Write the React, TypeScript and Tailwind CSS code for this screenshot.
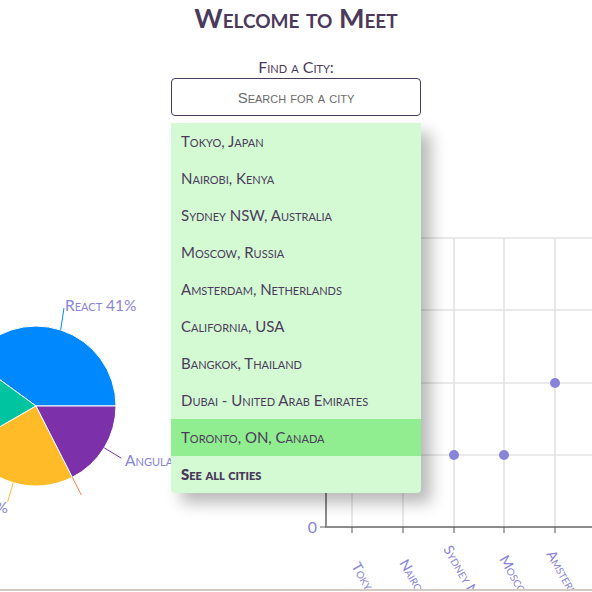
import React from 'react';

const cities = [
  'Tokyo, Japan',
  'Nairobi, Kenya',
  'Sydney NSW, Australia',
  'Moscow, Russia',
  'Amsterdam, Netherlands',
  'California, USA',
  'Bangkok, Thailand',
  'Dubai - United Arab Emirates',
  'Toronto, ON, Canada',
];

// x label start points (baseline) in scatter svg coords
const xLabels = [
  { text: 'Tokyo, Japan', x: 55, y: 442 },
  { text: 'Nairobi, Kenya', x: 103, y: 439 },
  { text: 'Sydney NSW, Australia', x: 147, y: 425 },
  { text: 'Moscow, Russia', x: 203, y: 435 },
  { text: 'Amsterdam, Netherlands', x: 250, y: 430 },
];

const gridX = [56, 107, 158, 208, 259];
const gridY = [114, 186, 259, 331];

const PieChart = () => (
  <svg width="296" height="465" className="block">
    <g stroke="#fff" strokeWidth="1">
      <path d="M36,282 L116,282 A80,80 0 0 0 -28.7,235 Z" fill="#0088FE" />
      <path d="M36,282 L-28.7,235 A80,80 0 0 0 -33.3,322 Z" fill="#00C49F" />
      <path d="M36,282 L-33.3,322 A80,80 0 0 0 72.3,353.3 Z" fill="#FFBB28" />
      <path d="M36,282 L72.3,353.3 A80,80 0 0 0 116,282 Z" fill="#7c30a9" />
    </g>
    <g fill="none" strokeWidth="1">
      <path d="M60.7,205.9 L64,184" stroke="#0088FE" />
      <path d="M104.2,323.8 L121.3,334.2" stroke="#7c30a9" />
      <path d="M13.3,358.7 L7.6,377.9" stroke="#FFBB28" />
      <path d="M72.3,353.3 L81.4,371" stroke="#FF8042" />
    </g>
    <g fill="#8884d8" fontSize="15.5">
      <text x="65" y="187">React 41%</text>
      <text x="125" y="342">Angular 18%</text>
      <text x="8" y="389" textAnchor="end">Node 24%</text>
    </g>
  </svg>
);

const ScatterChart = () => (
  <svg width="296" height="465" className="block">
    {gridY.map(y => (
      <line key={y} x1="30" x2="296" y1={y} y2={y} stroke="#d4d4d4" strokeWidth="1" />
    ))}
    {gridX.map(x => (
      <line key={x} x1={x} x2={x} y1="114" y2="403" stroke="#e2e2e2" strokeWidth="1.5" />
    ))}
    <line x1="30" x2="30" y1="114" y2="404" stroke="#8c8c8c" strokeWidth="2" />
    <line x1="29" x2="296" y1="403" y2="403" stroke="#8c8c8c" strokeWidth="2" />
    <line x1="24" x2="30" y1="403" y2="403" stroke="#666" strokeWidth="1" />
    {gridX.map(x => (
      <line key={x} x1={x} x2={x} y1="403" y2="409" stroke="#555" strokeWidth="1" />
    ))}
    <text x="21" y="409" textAnchor="end" fill="#8884d8" fontSize="16">0</text>
    {[[158, 331], [208, 331], [259, 259]].map(([cx, cy]) => (
      <circle key={cx} cx={cx} cy={cy} r="5" fill="#8884d8" />
    ))}
    <g fill="#8884d8" fontSize="14">
      {xLabels.map(l => (
        <text key={l.text} x={l.x} y={l.y} transform={`rotate(60 ${l.x} ${l.y})`}>{l.text}</text>
      ))}
    </g>
  </svg>
);

const App = () => {
  return (
    <div className="relative w-[592px] h-[592px] overflow-hidden bg-white font-['Lato',sans-serif] [font-variant:small-caps] text-[#4b3a5b]">
      <h1 className="h-9 leading-9 text-center text-[27px] font-bold">Welcome to Meet</h1>

      <div className="flex flex-col items-center mt-[21px]">
        <label className="leading-5 text-base">Find a City:</label>
        <div className="relative z-10 mt-px w-[250px]">
          <input
            type="text"
            placeholder="Search for a city"
            className="w-full h-[38px] border border-[#4b3a5b] rounded bg-white text-center text-[15px] font-['Liberation_Sans',sans-serif] [font-variant:small-caps] placeholder:text-[#6b6b6b] outline-none"
          />
          <ul className="absolute left-0 top-[45px] w-full bg-[#d4fad4] rounded-b shadow-[10px_10px_16px_rgba(0,0,0,0.28)]">
            {cities.map(city => (
              <li
                key={city}
                className={`h-[37px] leading-[37px] pl-[10px] text-[15px] ${city === 'Toronto, ON, Canada' ? 'bg-[#90ee90]' : ''}`}
              >
                {city}
              </li>
            ))}
            <li className="h-[37px] leading-[37px] pl-[10px] text-[15px] font-extrabold">See all cities</li>
          </ul>
        </div>
      </div>

      <div className="grid grid-cols-2 mt-2 border-b-2 border-[#d3cbc3]">
        <PieChart />
        <ScatterChart />
      </div>
    </div>
  );
};

export default App;
